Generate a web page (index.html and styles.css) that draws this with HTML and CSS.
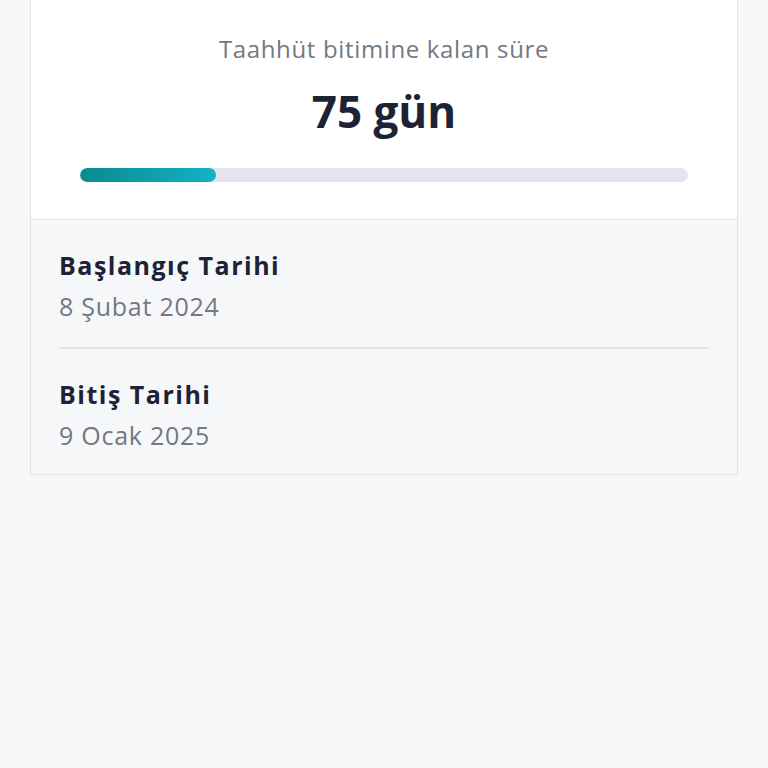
FILE: index.html
```html
<!DOCTYPE html>
<html lang="tr">
<head>
  <meta charset="UTF-8">
  <title>Taahhüt</title>
  <link rel="stylesheet" href="styles.css">
</head>
<body>

<div class="card">
  <div class="remaining">
    <p class="remaining-label">Taahhüt bitimine kalan süre</p>
    <p class="remaining-days">75 gün</p>
    <div class="progress">
      <div class="progress-fill" style="width: 22.4%"></div>
    </div>
  </div>

  <div class="dates">
    <div class="date-row">
      <div class="date-title">Başlangıç Tarihi</div>
      <div class="date-value">8 Şubat 2024</div>
    </div>
    <div class="date-row">
      <div class="date-title">Bitiş Tarihi</div>
      <div class="date-value">9 Ocak 2025</div>
    </div>
  </div>
</div>

</body>
</html>
```

FILE: styles.css
```css
body {
  background: #f6f7f9;
  font-family: 'Open Sans', 'Noto Sans', sans-serif;
  margin: 0;
  padding: 0;
}
.card {
  margin: 0 30px;
  border: 1px solid #e3e5e9;
  border-top: none;
}
.remaining {
  background: #fff;
  padding: 33px 49px 37px;
  border-bottom: 1px solid #e3e5e9;
  text-align: center;
}
.remaining-label {
  margin: 0;
  font-size: 24px;
  line-height: 32px;
  letter-spacing: 0.65px;
  color: #737884;
}
.remaining-days {
  margin: 20px 0 0;
  font-size: 44px;
  line-height: 52px;
  font-weight: bold;
  color: #1e2235;
}
.progress {
  margin-top: 31px;
  height: 14px;
  border-radius: 7px;
  background: #e2e4ee;
  overflow: hidden;
}
.progress-fill {
  height: 100%;
  border-radius: 7px;
  background: linear-gradient(90deg, #0b8a90, #12b2c6);
}
.dates {
  padding: 0 28px;
}
.date-row {
  padding: 28px 0 24px;
  border-bottom: 2px solid #e3e5e9;
}
.date-row:last-child {
  border-bottom: none;
  padding-bottom: 22px;
}
.date-title {
  font-size: 25px;
  line-height: 34px;
  font-weight: bold;
  letter-spacing: 1.5px;
  color: #1e2235;
}
.date-value {
  margin-top: 7px;
  font-size: 25px;
  line-height: 34px;
  letter-spacing: 0.75px;
  color: #737884;
}
```
